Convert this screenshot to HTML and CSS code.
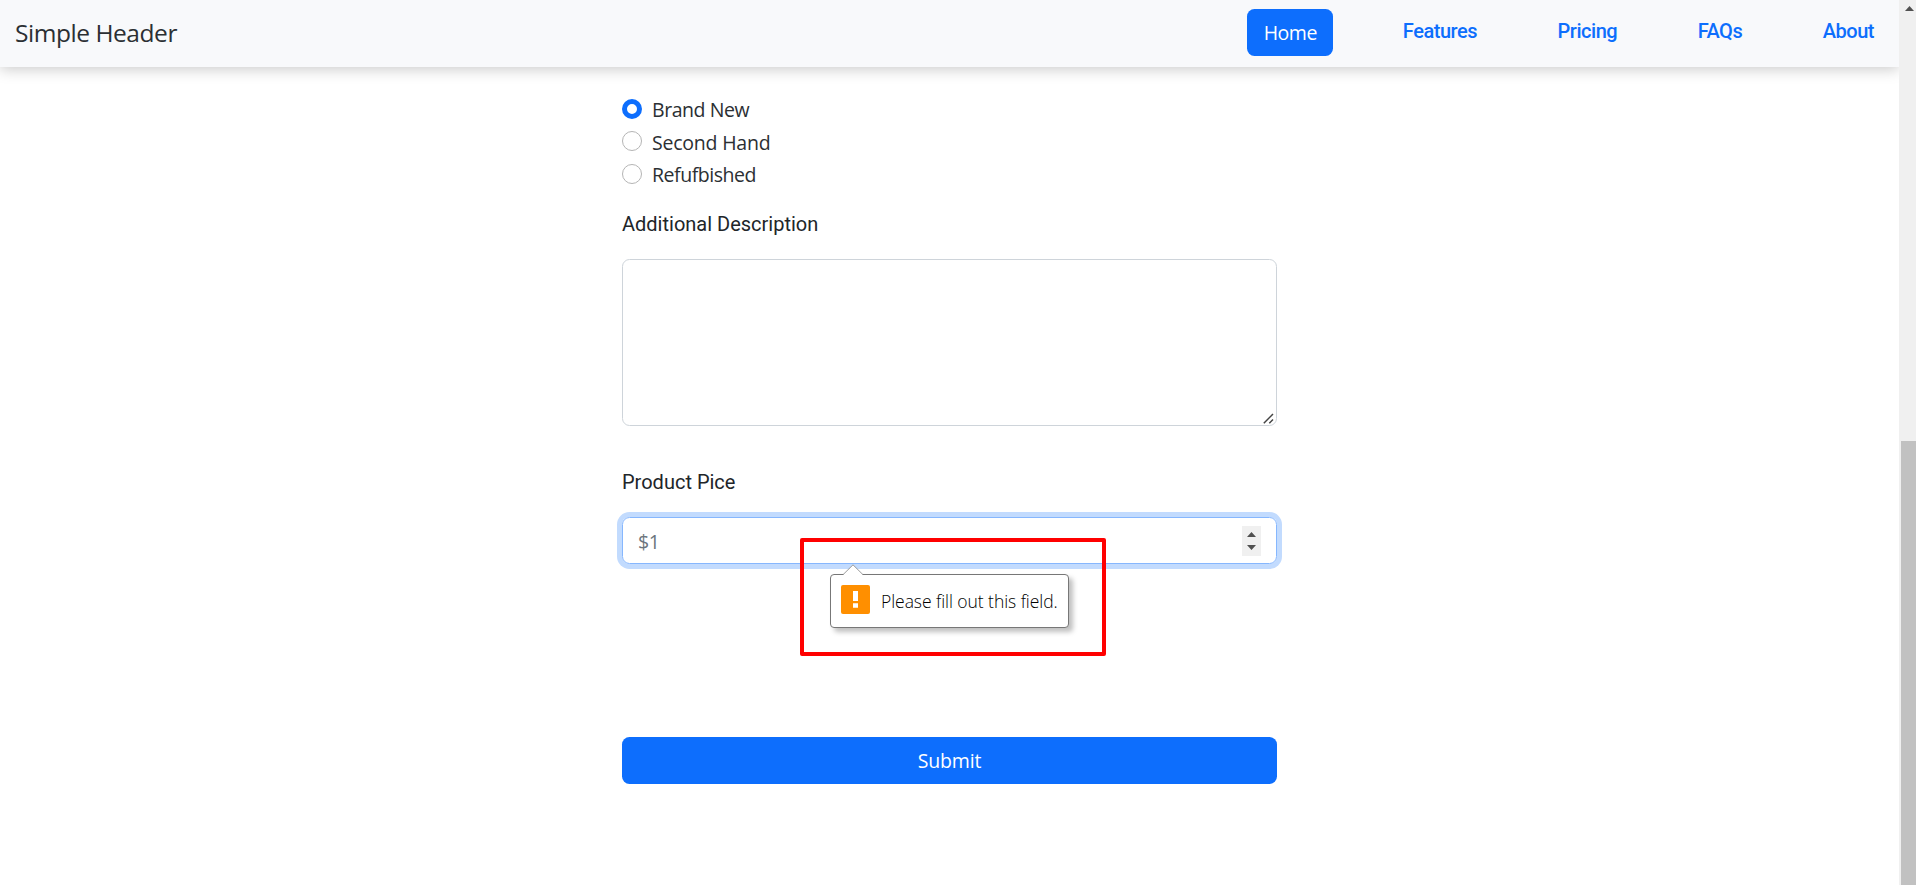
FILE: index.html
```html
<!DOCTYPE html>
<html lang="en">
<head>
<meta charset="utf-8">
<title>Simple Header</title>
<link rel="stylesheet" href="styles.css">
</head>
<body>
<div class="page">
  <header class="header">
    <span class="brand">Simple Header</span>
    <nav class="nav">
      <a class="nav-link active">Home</a>
      <a class="nav-link features">Features</a>
      <a class="nav-link pricing">Pricing</a>
      <a class="nav-link faqs">FAQs</a>
      <a class="nav-link about">About</a>
    </nav>
  </header>
  <main class="form">
    <div class="radios">
      <div class="radio"><span class="dot checked"></span><span class="t-brand">Brand New</span></div>
      <div class="radio"><span class="dot"></span><span class="t-second">Second Hand</span></div>
      <div class="radio"><span class="dot"></span><span class="t-refurb">Refufbished</span></div>
    </div>
    <div class="label">Additional Description</div>
    <div class="textarea">
      <svg class="grip" width="11" height="11" viewBox="0 0 11 11"><path d="M.8 10.2 10 1M6.3 10.2 10 6.5" fill="none" stroke="#444" stroke-width="1.5"/></svg>
    </div>
    <div class="label price-label">Product Pice</div>
    <div class="input">
      <span class="placeholder">$1</span>
      <span class="spinner">
        <svg width="19" height="30" viewBox="0 0 19 30"><path d="M5 11 9.5 6 14 11ZM5 19 9.5 24 14 19Z" fill="#505050"/></svg>
      </span>
      <div class="bubble">
        <svg class="pointer" width="22" height="12" viewBox="0 0 22 12"><path d="M1 11 11 .8 21 11V12H1Z" fill="#fff"/><path d="M1 10.7 11 .8 21 10.7" fill="none" stroke="#999"/></svg>
        <svg class="warn" width="29" height="29" viewBox="0 0 29 29"><rect width="29" height="29" rx="2" fill="#ff8f00"/><path d="M12 6h5v10h-5zM12 18.3h5v4.5h-5z" fill="#fff"/></svg>
        <span class="bubble-text">Please fill out this field.</span>
      </div>
      <div class="highlight"></div>
    </div>
    <div class="submit">Submit</div>
  </main>
</div>
<div class="scrollbar">
  <svg class="up" width="9" height="5" viewBox="0 0 9 5"><path d="M0 5 4.5 0 9 5Z" fill="#505050"/></svg>
  <div class="thumb"></div>
</div>
</body>
</html>
```
FILE: styles.css
```css
* { box-sizing: border-box; }
body {
  margin: 0;
  height: 885px;
  display: flex;
  overflow: hidden;
  background: #fff;
  color: #2b2f33;
  font-family: "Open Sans", "Noto Sans", sans-serif;
  font-size: 19.5px;
  line-height: 30px;
  white-space: nowrap;
}
.page { width: 1899px; overflow: hidden; }
.header {
  height: 67px;
  display: flex;
  justify-content: space-between;
  align-items: flex-start;
  padding: 9px 25px 0 15px;
  background: #f8f9fb;
  box-shadow: 0 2px 14px rgba(0, 0, 0, .22);
}
.brand { font-size: 24.5px; line-height: 47px; letter-spacing: -.45px; }
.nav { display: flex; }
.nav-link {
  color: #0d6efd;
  font-family: Roboto, sans-serif;
  font-weight: 500;
  font-size: 20px;
  line-height: 44px;
  letter-spacing: -.46px;
}
.nav-link.active {
  width: 86px;
  height: 47px;
  border-radius: 7.5px;
  background: #0d6efd;
  color: #fff;
  text-align: center;
  font-family: "Open Sans", sans-serif;
  font-weight: 400;
  font-size: 19.5px;
  line-height: 48px;
}
.features { margin-left: 69.5px; }
.pricing, .faqs, .about { margin-left: 80.4px; }
.form { width: 655px; margin: 26px 0 0 622px; }
.radio { display: flex; gap: 10px; height: 32.5px; }
.radio span:last-child { line-height: 33px; }
.dot {
  width: 20px;
  height: 20px;
  margin-top: 5.9px;
  border: 1px solid #b5b5b5;
  border-radius: 50%;
}
.dot.checked { border: 5px solid #0d6efd; }
.t-brand, .t-refurb { letter-spacing: -.45px; }
.t-second { letter-spacing: -.22px; }
.label {
  margin-top: 18px;
  height: 30px;
  color: #212529;
  font-family: Roboto, sans-serif;
  font-size: 20px;
}
.textarea {
  position: relative;
  height: 167px;
  margin-top: 20.5px;
  border: 1px solid #ced4da;
  border-radius: 7.5px;
}
.grip { position: absolute; right: 2px; bottom: 1px; }
.price-label { margin-top: 41px; }
.input {
  position: relative;
  display: flex;
  justify-content: space-between;
  align-items: center;
  height: 47px;
  margin-top: 20px;
  padding: 0 15px;
  border: 1px solid #86b7fe;
  border-radius: 7.5px;
  box-shadow: 0 0 0 5px #c2dbfe;
}
.placeholder { color: #6c757d; padding-top: 3px; letter-spacing: -.5px; }
.spinner { display: flex; background: #f0f0f0; }
.bubble {
  position: absolute;
  left: 207px;
  top: 56px;
  display: flex;
  align-items: flex-start;
  gap: 11px;
  width: 239px;
  height: 54px;
  padding: 10px;
  border: 1px solid #777;
  border-radius: 4px;
  background: #fff;
  box-shadow: 4px 4px 5px rgba(0, 0, 0, .25);
}
.pointer { position: absolute; left: 11px; top: -11px; }
.bubble-text { color: #000; font-size: 17.5px; font-weight: 300; line-height: 33px; letter-spacing: -.06px; }
.highlight {
  position: absolute;
  left: 177px;
  top: 20px;
  width: 306px;
  height: 118px;
  border: 4px solid #f00;
  border-radius: 2px;
}
.submit {
  height: 47px;
  margin-top: 173px;
  border-radius: 7.5px;
  background: #0d6efd;
  color: #fff;
  text-align: center;
  line-height: 48px;
  letter-spacing: -.2px;
}
.scrollbar { width: 17px; background: #f0f0f0; padding: 6px 0 0 2px; }
.up { display: block; margin-left: 4px; }
.thumb { height: 444px; margin-top: 430px; background: #c1c1c1; }
```
